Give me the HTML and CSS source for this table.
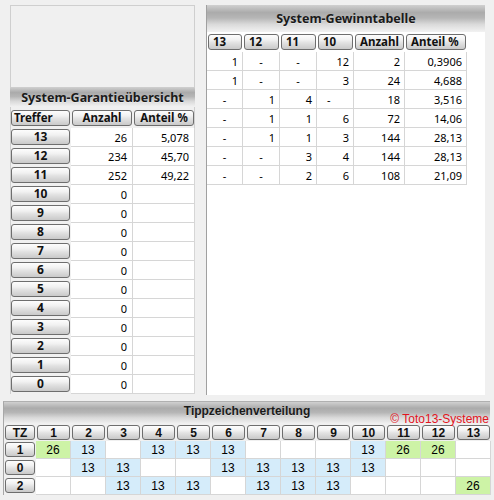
FILE: index.html
```html
<!DOCTYPE html>
<html lang="de">
<head>
<meta charset="utf-8">
<title>Toto13-Systeme</title>
<link rel="stylesheet" href="styles.css">
</head>
<body>
<div class="top">
  <section class="panel panel-left">
    <div class="bar bar-left"><span class="bar-title">System-Garantieübersicht</span></div>
    <div class="grid g-left">
      <div class="hc"><div class="btn">Treffer</div></div>
      <div class="hc"><div class="btn">Anzahl</div></div>
      <div class="hc"><div class="btn">Anteil %</div></div>

      <div class="rh"><div class="btn">13</div></div><div class="c">26</div><div class="c">5,078</div>
      <div class="rh"><div class="btn">12</div></div><div class="c">234</div><div class="c">45,70</div>
      <div class="rh"><div class="btn">11</div></div><div class="c">252</div><div class="c">49,22</div>
      <div class="rh"><div class="btn">10</div></div><div class="c">0</div><div class="c"></div>
      <div class="rh"><div class="btn">9</div></div><div class="c">0</div><div class="c"></div>
      <div class="rh"><div class="btn">8</div></div><div class="c">0</div><div class="c"></div>
      <div class="rh"><div class="btn">7</div></div><div class="c">0</div><div class="c"></div>
      <div class="rh"><div class="btn">6</div></div><div class="c">0</div><div class="c"></div>
      <div class="rh"><div class="btn">5</div></div><div class="c">0</div><div class="c"></div>
      <div class="rh"><div class="btn">4</div></div><div class="c">0</div><div class="c"></div>
      <div class="rh"><div class="btn">3</div></div><div class="c">0</div><div class="c"></div>
      <div class="rh"><div class="btn">2</div></div><div class="c">0</div><div class="c"></div>
      <div class="rh"><div class="btn">1</div></div><div class="c">0</div><div class="c"></div>
      <div class="rh"><div class="btn">0</div></div><div class="c">0</div><div class="c"></div>
    </div>
  </section>

  <section class="panel panel-right">
    <div class="bar bar-right"><span class="bar-title">System-Gewinntabelle</span></div>
    <div class="grid g-right">
      <div class="hc"><div class="btn btn-l">13</div></div>
      <div class="hc"><div class="btn btn-l">12</div></div>
      <div class="hc"><div class="btn btn-l">11</div></div>
      <div class="hc"><div class="btn btn-l">10</div></div>
      <div class="hc"><div class="btn btn-l">Anzahl</div></div>
      <div class="hc"><div class="btn btn-l">Anteil %</div></div>

      <div class="c">1</div><div class="c dash">-</div><div class="c dash">-</div><div class="c">12</div><div class="c">2</div><div class="c">0,3906</div>
      <div class="c">1</div><div class="c dash">-</div><div class="c dash">-</div><div class="c">3</div><div class="c">24</div><div class="c">4,688</div>
      <div class="c dash">-</div><div class="c">1</div><div class="c">4</div><div class="c dash dash-l">-</div><div class="c">18</div><div class="c">3,516</div>
      <div class="c dash">-</div><div class="c">1</div><div class="c">1</div><div class="c">6</div><div class="c">72</div><div class="c">14,06</div>
      <div class="c dash">-</div><div class="c">1</div><div class="c">1</div><div class="c">3</div><div class="c">144</div><div class="c">28,13</div>
      <div class="c dash">-</div><div class="c dash">-</div><div class="c">3</div><div class="c">4</div><div class="c">144</div><div class="c">28,13</div>
      <div class="c dash">-</div><div class="c dash">-</div><div class="c">2</div><div class="c">6</div><div class="c">108</div><div class="c">21,09</div>
    </div>
  </section>
</div>

<section class="panel-bottom">
  <div class="bar bar-bottom">
    <span class="bar-title">Tippzeichenverteilung</span>
    <span class="copy">© Toto13-Systeme</span>
  </div>
  <div class="grid g-bottom">
    <div class="hc"><div class="btn">TZ</div></div>
    <div class="hc"><div class="btn">1</div></div>
    <div class="hc"><div class="btn">2</div></div>
    <div class="hc"><div class="btn">3</div></div>
    <div class="hc"><div class="btn">4</div></div>
    <div class="hc"><div class="btn">5</div></div>
    <div class="hc"><div class="btn">6</div></div>
    <div class="hc"><div class="btn">7</div></div>
    <div class="hc"><div class="btn">8</div></div>
    <div class="hc"><div class="btn">9</div></div>
    <div class="hc"><div class="btn">10</div></div>
    <div class="hc"><div class="btn">11</div></div>
    <div class="hc"><div class="btn">12</div></div>
    <div class="hc"><div class="btn">13</div></div>

    <div class="rh"><div class="btn">1</div></div>
    <div class="c g">26</div><div class="c b">13</div><div class="c"></div><div class="c b">13</div><div class="c b">13</div><div class="c b">13</div><div class="c"></div><div class="c"></div><div class="c"></div><div class="c b">13</div><div class="c g">26</div><div class="c g">26</div><div class="c"></div>

    <div class="rh"><div class="btn">0</div></div>
    <div class="c"></div><div class="c b">13</div><div class="c b">13</div><div class="c"></div><div class="c"></div><div class="c b">13</div><div class="c b">13</div><div class="c b">13</div><div class="c b">13</div><div class="c b">13</div><div class="c"></div><div class="c"></div><div class="c"></div>

    <div class="rh"><div class="btn">2</div></div>
    <div class="c"></div><div class="c"></div><div class="c b">13</div><div class="c b">13</div><div class="c b">13</div><div class="c"></div><div class="c b">13</div><div class="c b">13</div><div class="c b">13</div><div class="c"></div><div class="c"></div><div class="c"></div><div class="c g">26</div>
  </div>
</section>
</body>
</html>
```

FILE: styles.css
```css
* { box-sizing: border-box; }

html, body {
  margin: 0;
  padding: 0;
}

body {
  width: 494px;
  height: 500px;
  overflow: hidden;
  background: #f0f0f0;
  color: #000;
  font-family: "Noto Sans", "Open Sans", sans-serif;
  font-size: 11px;
}

.top {
  display: flex;
  align-items: flex-start;
  gap: 11px;
  padding: 5px 0 0 10px;
  height: 401px;
}

.panel-left {
  width: 185px;
  height: 389px;
  border: 1px solid #cfcfcf;
  border-bottom: none;
  display: flex;
  flex-direction: column;
  justify-content: flex-end;
}

.panel-right {
  width: 279px;
  height: 390px;
  background: #fff;
  border-left: 1px solid #a0a0a0;
  display: flex;
  flex-direction: column;
}

/* gradient title bars */
.bar {
  position: relative;
  display: flex;
  justify-content: center;
  align-items: center;
  background: linear-gradient(to bottom, #d0d0d0 0%, #ababab 28%, #b6b6b6 48%, #dadada 72%, #f2f2f2 100%);
  font-weight: bold;
  color: #1a1a1a;
}

.bar-title {
  text-shadow: 0 1px 0 rgba(255, 255, 255, 0.35);
}

.bar-left {
  height: 20px;
  margin: 0 -1px 2px -1px;
  font-size: 12.5px;
}

.bar-right {
  height: 27px;
  margin-bottom: 1px;
  font-size: 12.5px;
}

.bar-bottom {
  height: 22px;
  font-size: 12px;
  line-height: 14px;
  align-items: flex-start;
  padding-top: 2px;
  font-family: "Liberation Sans", Arial, sans-serif;
}

.copy {
  position: absolute;
  right: 1px;
  bottom: -1px;
  font-weight: normal;
  font-size: 12px;
  line-height: 12px;
  color: #e3141e;
  font-family: "Liberation Sans", Arial, sans-serif;
  text-shadow: none;
}

/* grids */
.grid {
  display: grid;
}

.g-left {
  grid-template-columns: 61px 62px 62px;
  grid-auto-rows: 19px;
  margin: 0 -1px;
}

.g-right {
  grid-template-columns: 36px 37px 37px 37px 51px 62px;
  grid-auto-rows: 19px;
  width: 260px;
}

.g-bottom {
  grid-template-columns: 32px repeat(13, 35px);
  grid-template-rows: 17px;
  grid-auto-rows: 18px;
  font-family: "Liberation Sans", Arial, sans-serif;
  font-size: 12px;
}

.hc, .rh {
  display: flex;
  padding: 1px 1px 2px 1px;
}

.g-bottom .hc {
  padding: 1px;
}

.btn {
  flex: 1;
  display: flex;
  align-items: center;
  justify-content: center;
  border: 1px solid #6e6e6e;
  border-radius: 3px;
  background: linear-gradient(to bottom, #fdfdfd 0%, #f1f1f1 35%, #e2e2e2 55%, #c9c9c9 100%);
  font-weight: bold;
  font-size: 12px;
  color: #111;
  line-height: 1;
}

.hc .btn {
  font-size: 11.5px;
}

.btn-l {
  justify-content: flex-start;
  padding-left: 4px;
}

.g-left .hc:first-child .btn {
  justify-content: flex-start;
  padding-left: 2px;
}

.c {
  display: flex;
  align-items: center;
  justify-content: flex-end;
  padding-right: 4px;
  background: #fff;
  border-right: 1px solid #d6d6d6;
  border-bottom: 1px solid #d6d6d6;
}

.g-left .c {
  padding-right: 5px;
}

.dash {
  justify-content: center;
  padding-right: 0;
}

.dash-l {
  justify-content: flex-start;
  padding-left: 10px;
}

.panel-bottom {
  margin: 0 0 0 3px;
  width: 487px;
  border-left: 1px solid #a8a8a8;
  border-top: 1px solid #b0b0b0;
}

.g-bottom .c {
  justify-content: center;
  padding-right: 0;
}

.g-bottom .btn {
  font-family: "Liberation Sans", Arial, sans-serif;
  font-size: 12px;
}

.g-bottom .c.g { background: #cdf3a6; }
.g-bottom .c.b { background: #d5ecfa; }
```
